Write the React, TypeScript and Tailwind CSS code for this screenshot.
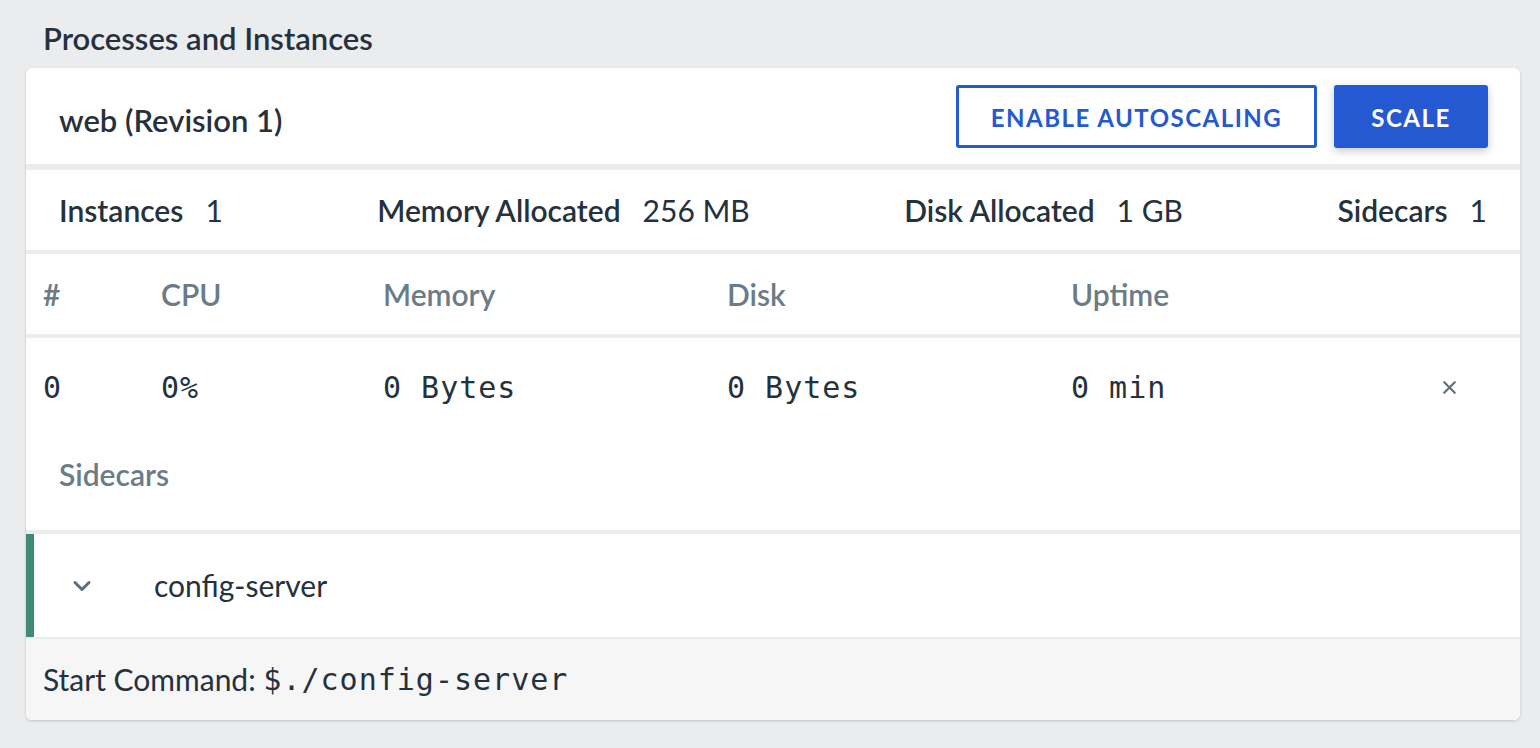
import { X, ChevronDown } from 'lucide-react';

const sans = { fontFamily: 'Lato, "Liberation Sans", sans-serif' };
const mono = { fontFamily: '"DejaVu Sans Mono", monospace' };

const Stat = ({ label, value }: { label: string; value: string }) => (
  <div className="flex items-baseline gap-[22px]">
    <span className="font-semibold">{label}</span>
    <span className="font-normal">{value}</span>
  </div>
);

const Gap = ({ h }: { h: string }) => <div className={`${h} bg-[#ebecee]`} />;

const cols = 'grid grid-cols-[118px_222px_344px_344px_1fr_80px] items-center pl-[17px]';

export default function App() {
  return (
    <div
      className="min-h-[748px] w-[1540px] bg-[#ebecee] text-[#25313c] pt-[19px] pb-[28px]"
      style={sans}
    >
      <h2 className="px-[43px] text-[31px] font-semibold leading-[38px] h-[49px]">
        Processes and Instances
      </h2>

      <div className="ml-[26px] mr-[20px] bg-white rounded-md shadow-[0_1px_3px_rgba(0,0,0,0.18)] overflow-hidden">
        {/* Header */}
        <div className="h-[96px] flex items-center justify-between pl-[33px] pr-[32px]">
          <div className="text-[31px] font-semibold pt-[8px]">web (Revision 1)</div>
          <div className="flex gap-[17px]">
            <button
              type="button"
              className="w-[361px] h-[63px] pt-[3px] border-[3px] border-[#2559d1] rounded-[3px] text-[#2559d1] text-[24px] font-bold tracking-[1.5px]"
            >
              ENABLE AUTOSCALING
            </button>
            <button
              type="button"
              className="w-[154px] h-[63px] pt-[3px] bg-[#2559d1] rounded-[3px] text-white text-[24px] font-bold tracking-[1.5px] shadow-[0_3px_8px_rgba(0,0,0,0.22)]"
            >
              SCALE
            </button>
          </div>
        </div>
        <Gap h="h-[6px]" />

        {/* Allocation stats */}
        <div className="h-[80px] flex items-center justify-between pl-[33px] pr-[33px] text-[30px]">
          <Stat label="Instances" value="1" />
          <Stat label="Memory Allocated" value="256 MB" />
          <Stat label="Disk Allocated" value="1 GB" />
          <Stat label="Sidecars" value="1" />
        </div>
        <Gap h="h-[4px]" />

        {/* Table header */}
        <div className={`${cols} h-[80px] text-[30px] font-semibold text-[#6b7b87]`}>
          <span>#</span>
          <span>CPU</span>
          <span>Memory</span>
          <span>Disk</span>
          <span>Uptime</span>
          <span />
        </div>
        <Gap h="h-[4px]" />

        {/* Instance row */}
        <div className={`${cols} h-[98px] text-[30px] tracking-[1px] text-[#25313c]`} style={mono}>
          <span>0</span>
          <span>0%</span>
          <span>0 Bytes</span>
          <span>0 Bytes</span>
          <span>0 min</span>
          <span className="flex">
            <X size={21} strokeWidth={2.5} className="text-[#5f6f7b] -ml-[1px]" />
          </span>
        </div>
        <div className="pl-[33px] pt-[21px] pb-[39px] text-[30px] font-semibold text-[#6b7b87] leading-[34px]">
          Sidecars
        </div>
        <Gap h="h-[4px]" />

        {/* Sidecar */}
        <div className="h-[103px] flex items-center border-l-[8px] border-[#3e8a72]">
          <ChevronDown size={28} strokeWidth={2.6} className="ml-[34px] text-[#5e6e7a]" />
          <span className="ml-[58px] text-[30px]">config-server</span>
        </div>
        <div className="h-[2px] bg-[#ebecee]" />

        {/* Footer */}
        <div className="h-[81px] bg-[#f6f6f7] flex items-center pl-[17px] text-[30px]">
          <span>Start Command:&nbsp;</span>
          <span className="tracking-[1px]" style={mono}>
            $./config-server
          </span>
        </div>
      </div>
    </div>
  );
}
